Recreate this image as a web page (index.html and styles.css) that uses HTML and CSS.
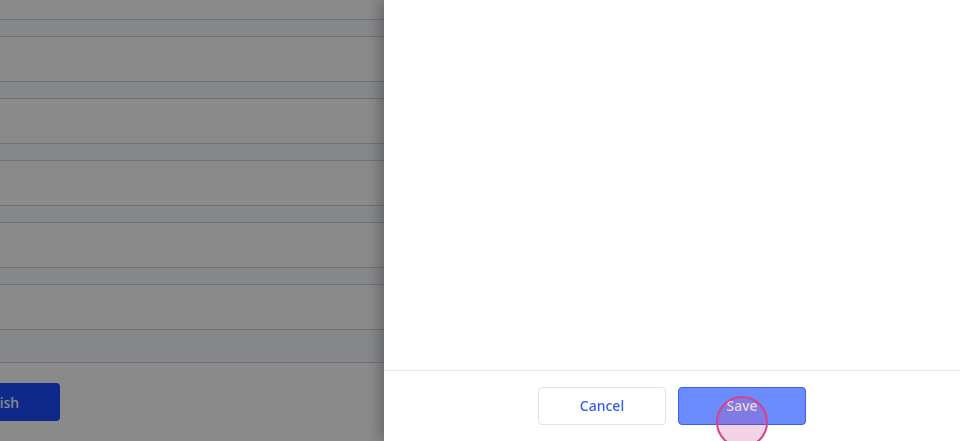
FILE: index.html
```html
<!DOCTYPE html>
<html lang="en">
<head>
<meta charset="utf-8">
<title>Edit</title>
<link rel="stylesheet" href="styles.css">
</head>
<body>
<main class="page">
  <div class="list">
    <div class="card"></div>
    <div class="card"></div>
    <div class="card"></div>
    <div class="card"></div>
    <div class="card"></div>
    <div class="card"></div>
  </div>
  <div class="page-footer">
    <button class="btn-publish">Publish</button>
  </div>
</main>
<div class="backdrop"></div>
<aside class="drawer">
  <div class="drawer-body"></div>
  <div class="drawer-footer">
    <button class="btn btn-cancel">Cancel</button>
    <button class="btn btn-save">Save</button>
  </div>
</aside>
<div class="touch"></div>
</body>
</html>
```
FILE: styles.css
```css
* { box-sizing: border-box; }
html, body { margin: 0; height: 100%; overflow: hidden; }
body {
  background: #f7f9fc;
  font-family: "Noto Sans", "Open Sans", sans-serif;
}
.page {
  margin-left: -40px;
  width: 426px;
  height: 100%;
  display: flex;
  flex-direction: column;
}
.list {
  display: flex;
  flex-direction: column;
  gap: 16px;
  margin-top: -26px;
}
.card {
  height: 46px;
  background: #fff;
  border: 1px solid #cdd4e2;
  border-radius: 4px;
}
.page-footer {
  margin-top: 32px;
  flex: 1;
  background: #fff;
  border-top: 1px solid #cdd4e2;
  padding-top: 20px;
}
.btn-publish {
  margin-left: -30px;
  width: 130px;
  height: 38px;
  border: 0;
  border-radius: 4px;
  background: #1a4dff;
  color: #fff;
  font-family: "Noto Sans", sans-serif;
  font-size: 14px;
  font-weight: 500;
  padding: 0 0 0 40px;
  text-align: left;
}
.backdrop {
  position: fixed;
  inset: 0;
  background: rgba(0, 0, 0, 0.46);
}
.drawer {
  position: fixed;
  top: 0;
  right: 0;
  bottom: 0;
  width: 576px;
  background: #fff;
  box-shadow: -4px 0 14px rgba(0, 0, 0, 0.28);
  display: flex;
  flex-direction: column;
}
.drawer-body { flex: 1; }
.drawer-footer {
  border-top: 1px solid #e3e8f1;
  padding: 16px 0;
  display: flex;
  justify-content: center;
  gap: 12px;
}
.btn {
  width: 128px;
  height: 38px;
  border-radius: 4px;
  font-family: "Noto Sans", sans-serif;
  font-size: 14px;
  font-weight: 500;
  padding-bottom: 2px;
}
.btn-cancel {
  background: #fff;
  border: 1px solid #dde3ee;
  color: #2f5ff0;
}
.btn-save {
  background: #6a8cff;
  border: 1px solid #3a5ef2;
  color: #fff;
}
.touch {
  position: fixed;
  left: 716px;
  top: 396px;
  width: 52px;
  height: 52px;
  border-radius: 50%;
  border: 2px solid #d8428b;
  background: rgba(205, 60, 132, 0.22);
}
```
